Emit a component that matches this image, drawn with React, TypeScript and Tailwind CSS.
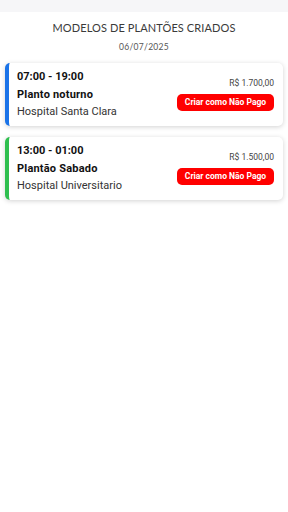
import React from "react";

type Modelo = {
  horario: string;
  nome: string;
  local: string;
  valor: string;
  cor: string;
};

const modelos: Modelo[] = [
  {
    horario: "07:00 - 19:00",
    nome: "Planto noturno",
    local: "Hospital Santa Clara",
    valor: "R$ 1.700,00",
    cor: "border-l-[#1a73e8]",
  },
  {
    horario: "13:00 - 01:00",
    nome: "Plantão Sabado",
    local: "Hospital Universitario",
    valor: "R$ 1.500,00",
    cor: "border-l-[#2fbf4f]",
  },
];

function ModeloCard({ modelo }: { modelo: Modelo }) {
  return (
    <div
      className={`flex h-[63px] items-stretch justify-between rounded-[5px] border-l-4 bg-white pl-2 pr-[9px] shadow-[0_1px_5px_rgba(0,0,0,0.18)] ${modelo.cor}`}
    >
      <div className="flex flex-col pt-[6px] font-['Roboto',sans-serif] text-[#111]">
        <span className="text-[11px] font-bold leading-[16px]">{modelo.horario}</span>
        <span className="mt-[2px] text-[11px] font-bold leading-[16px] tracking-[0.2px]">
          {modelo.nome}
        </span>
        <span className="mt-[1px] text-[11px] leading-[16px] text-[#333]">{modelo.local}</span>
      </div>
      <div className="flex flex-col items-end pt-[15px] font-['Roboto',sans-serif]">
        <span className="text-[8.5px] leading-[10px] text-[#444]">{modelo.valor}</span>
        <button
          type="button"
          className="mt-[6px] h-[17px] w-[97px] rounded-[5px] bg-[#ff0000] text-[8.5px] font-bold text-white"
        >
          Criar como Não Pago
        </button>
      </div>
    </div>
  );
}

export default function App() {
  return (
    <div className="min-h-[512px] bg-white">
      <div className="h-[12px] bg-[#f6f6f8]" />
      <div className="flex flex-col items-center pt-[9px] font-['Lato',sans-serif]">
        <h1 className="text-[11px] font-normal leading-[14px] tracking-[0.1px] text-[#3a3a3a]">
          MODELOS DE PLANTÕES CRIADOS
        </h1>
        <p className="mt-[7px] text-[8.5px] leading-[11px] tracking-[0.3px] text-[#555]">
          06/07/2025
        </p>
      </div>
      <div className="mt-[10px] flex flex-col gap-[11px] pl-[5px] pr-[5px]">
        {modelos.map((m) => (
          <ModeloCard key={m.horario} modelo={m} />
        ))}
      </div>
    </div>
  );
}
